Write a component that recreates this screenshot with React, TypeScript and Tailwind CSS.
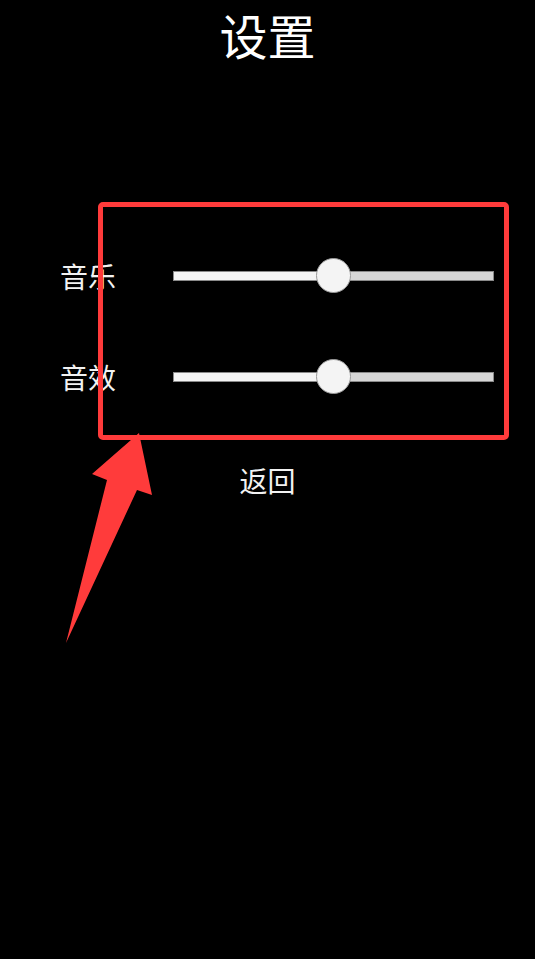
import React from "react";

const font = { fontFamily: '"Noto Sans CJK SC", "Noto Sans", sans-serif' };

function Slider() {
  return (
    <div className="relative shrink-0 w-[321px] h-[10px]">
      <div className="absolute inset-0 flex border border-[#8a8a8a]">
        <div className="w-[160px] h-full bg-[#f5f5f5]" />
        <div className="flex-1 h-full bg-[#d6d6d6]" />
      </div>
      <div className="absolute left-[143px] top-[-13px] w-[35px] h-[35px] rounded-full bg-[#f4f4f4] border border-[#9a9a9a]" />
    </div>
  );
}

function Row({ label, className }: { label: string; className?: string }) {
  return (
    <div className={"flex items-center h-[36px] " + (className ?? "")}>
      <div className="shrink-0 whitespace-nowrap w-[173px] pl-[60px] text-[28px] leading-none text-[#f2f2f2]">{label}</div>
      <Slider />
    </div>
  );
}

export default function App() {
  return (
    <div className="relative w-[535px] h-[959px] bg-black overflow-hidden" style={font}>
      <div className="flex flex-col">
        <div className="pt-[10px] text-center text-[48px] leading-none text-white">设置</div>
        <Row label="音乐" className="mt-[200px]" />
        <Row label="音效" className="mt-[65px]" />
        <div className="mt-[71px] text-center text-[28px] leading-none text-[#f2f2f2]">返回</div>
      </div>
      <div className="absolute left-[98px] top-[202px] w-[411px] h-[238px] border-[5px] border-[#ff3b3b] rounded-[5px]" />
      <svg className="absolute left-0 top-0" width="535" height="959" viewBox="0 0 535 959">
        <polygon points="139,433 152,495 137,490 66,643 107,480 92,474" fill="#ff3b3b" />
      </svg>
    </div>
  );
}
